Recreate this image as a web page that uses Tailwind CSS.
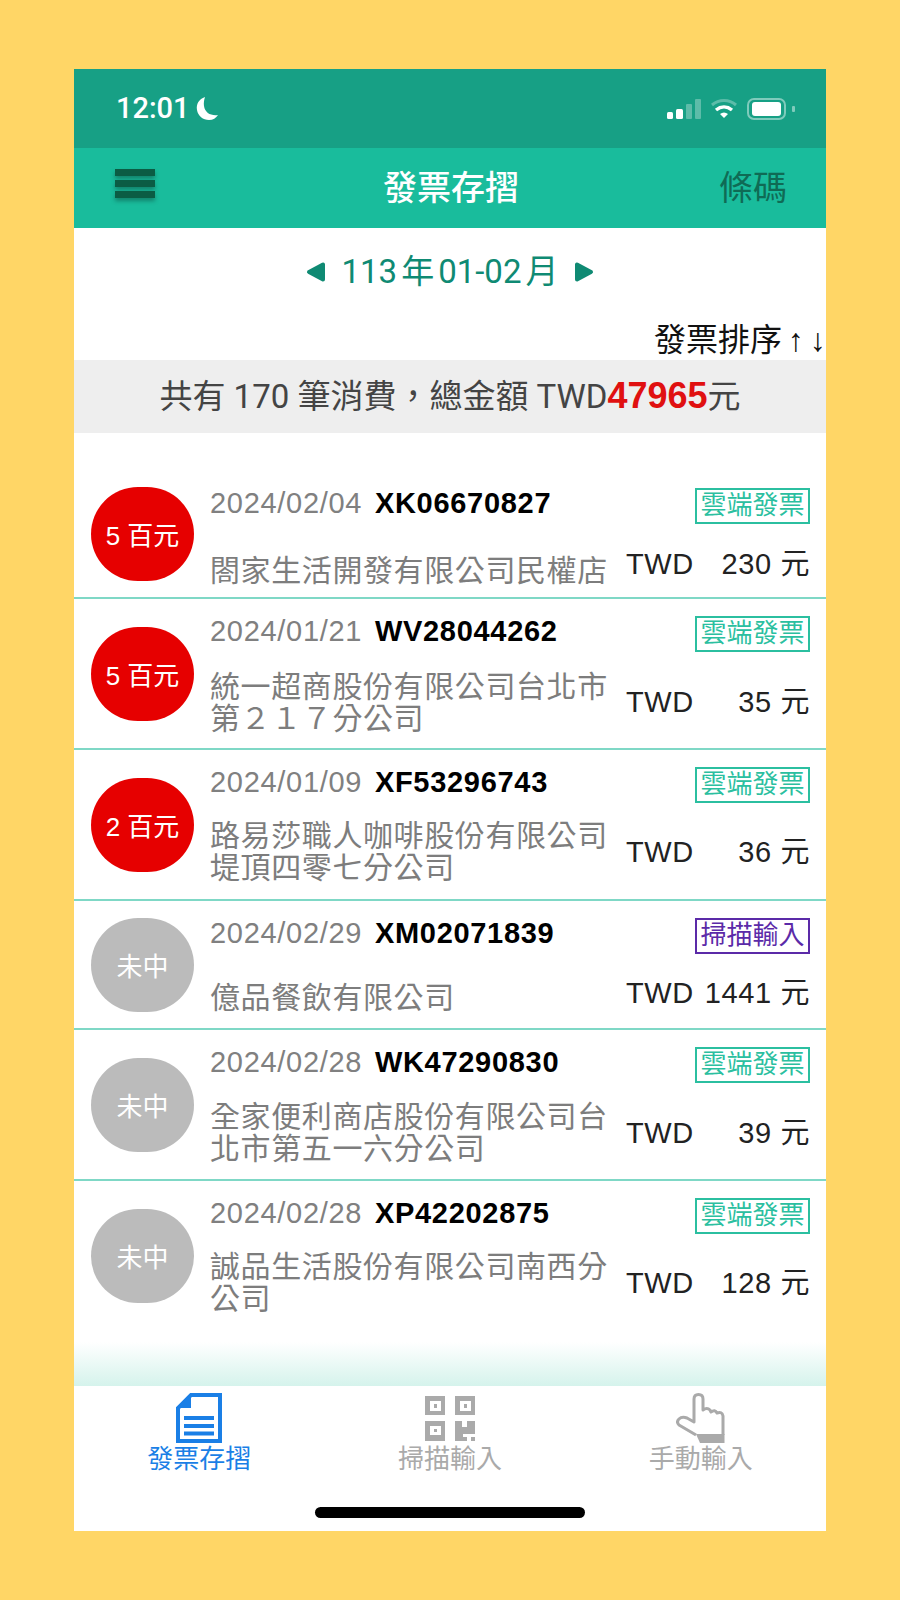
<!DOCTYPE html>
<html lang="zh-Hant">
<head>
    <meta charset="UTF-8">
    <meta name="viewport" content="width=device-width, initial-scale=1.0">
    <title>發票存摺</title>
    <script src="https://cdn.jsdelivr.net/npm/@tailwindcss/browser@4"></script>
</head>
<body class="bg-[#ffd666] h-[1600px] overflow-hidden pt-[69px] font-['Liberation_Sans','Noto_Sans_CJK_TC',sans-serif]">
    <div class="w-[752px] h-[1462px] mx-auto bg-white flex flex-col">
        <!-- status bar -->
        <div class="h-[79px] bg-[#17a085] flex items-center justify-between pl-[42px] pr-[30px] text-white">
            <div class="flex items-center gap-[5px] font-['Roboto','Liberation_Sans',sans-serif] text-[29px] font-medium">
                <span>12:01</span>
                <svg width="24" height="26" viewBox="0 0 24 26"><path d="M10 1C4 3 1 8 2 14c1 6 6 10 12 10 4 0 7-2 9-5-7 1-13-2-14-9-.4-3 0-6 1-9z" fill="#fff"/></svg>
            </div>
            <div class="flex items-center gap-[9px]">
                <svg width="34" height="20" viewBox="0 0 34 20"><rect x="0" y="13" width="6" height="7" rx="1.500" fill="#fff"/><rect x="9" y="10" width="7" height="10" rx="1.500" fill="#fff"/><rect x="19" y="5" width="6" height="15" rx="1" fill="#fff" fill-opacity=".3"/><rect x="28" y="0" width="6" height="20" rx="1" fill="#fff" fill-opacity=".3"/></svg>
                <svg width="28" height="20" viewBox="0 0 28 20"><path d="M2 6c7-6 17-6 24 0" fill="none" stroke="#fff" stroke-opacity=".3" stroke-width="3"/><path d="M6 11c5-4 11-4 16 0" fill="none" stroke="#fff" stroke-width="3.500"/><path d="M14 19l-4-4c2.500-2 5.500-2 8 0z" fill="#fff"/></svg>
                <svg width="49" height="22" viewBox="0 0 49 22"><rect x="1" y="1" width="37" height="20" rx="6" fill="none" stroke="#fff" stroke-opacity=".45" stroke-width="2"/><rect x="5" y="4" width="29" height="14" rx="3" fill="#fff"/><rect x="45" y="8" width="3" height="6" rx="1" fill="#fff" fill-opacity=".45"/></svg>
            </div>
        </div>
        <!-- header -->
        <div class="h-[80px] bg-[#19bc9c] grid grid-cols-[1fr_auto_1fr] items-center pl-[41px] pr-[39px]">
            <div class="flex flex-col gap-[4px] w-[40px] pb-[10px] drop-shadow-[0_3px_2px_rgba(0,0,0,0.3)]">
                <span class="h-[7px] bg-[#0b5c44]"></span>
                <span class="h-[7px] bg-[#0b5c44]"></span>
                <span class="h-[7px] bg-[#0b5c44]"></span>
            </div>
            <div class="text-white text-[34px] font-medium leading-none">發票存摺</div>
            <div class="text-right text-[#0f6b55] text-[34px] leading-none">條碼</div>
        </div>
        <!-- period -->
        <div class="h-[86px] flex items-center justify-center gap-[16px] text-[#0f8a73] text-[33px] pt-[1px]">
            <svg width="20" height="22" viewBox="0 0 20 22"><path d="M17 3.500V18.500L3 11z" fill="#0f8a73" stroke="#0f8a73" stroke-width="4" stroke-linejoin="round"/></svg>
            <span class="font-['Roboto','Noto_Sans_CJK_TC',sans-serif]">113<span class="mx-[4px]">年</span>01-02<span class="ml-[4px]">月</span></span>
            <svg width="20" height="22" viewBox="0 0 20 22"><path d="M3 3.500V18.500L17 11z" fill="#0f8a73" stroke="#0f8a73" stroke-width="4" stroke-linejoin="round"/></svg>
        </div>
        <!-- sort -->
        <div class="h-[46px] flex items-center justify-end text-[32px] text-[#111] leading-none pt-[5px]">
            <span>發票排序</span><span class="ml-[6px] mr-[6px]">↑</span><span>↓</span>
        </div>
        <!-- summary -->
        <div class="h-[73px] bg-[#eeeeee] flex items-center justify-center text-[33px] text-[#444] font-['Roboto','Noto_Sans_CJK_TC',sans-serif] pb-[2px]">
            <span>共有 170 筆消費，總金額 TWD<b class="text-[#e01010] text-[36px] font-bold font-['Liberation_Sans']">47965</b>元</span>
        </div>
        <!-- invoice list -->
        <div class="mt-[38px]">
            <div class="h-[128px] border-b-2 border-[#7fd8c6] flex items-center pl-[17px] pr-[16px] gap-[16px]">
                <div class="w-[103px] h-[94px] pt-[5px] shrink-0 rounded-full bg-[#e60000] text-white text-[26px] flex items-center justify-center">5 百元</div>
                <div class="flex-1 min-w-0 self-stretch pt-[17px]">
                    <div class="flex items-start justify-between h-[36px]">
                        <div class="text-[29px] leading-[30px] tracking-[0.7px] text-[#808080]">2024/02/04 <b class="ml-[4px] text-black">XK06670827</b></div>
                        <div class="h-[36px] w-[115px] border-2 border-[#2bbfa0] text-[#2bbfa0] text-[26px] leading-[30px] text-center">雲端發票</div>
                    </div>
                    <div class="flex items-center justify-between mt-[24px]">
                        <div class="w-[405px] text-[30px] leading-[32px] tracking-[0.6px] text-[#7d7d7d]">閤家生活開發有限公司民權店</div>
                        <div class="w-[184px] flex justify-between text-[29px] leading-[32px] tracking-[0.6px] text-[#222] pb-[14px]"><span>TWD</span><span>230 元</span></div>
                    </div>
                </div>
            </div>
            <div class="h-[151px] border-b-2 border-[#7fd8c6] flex items-center pl-[17px] pr-[16px] gap-[16px]">
                <div class="w-[103px] h-[94px] pt-[5px] shrink-0 rounded-full bg-[#e60000] text-white text-[26px] flex items-center justify-center">5 百元</div>
                <div class="flex-1 min-w-0 self-stretch pt-[17px]">
                    <div class="flex items-start justify-between h-[36px]">
                        <div class="text-[29px] leading-[30px] tracking-[0.7px] text-[#808080]">2024/01/21 <b class="ml-[4px] text-black">WV28044262</b></div>
                        <div class="h-[36px] w-[115px] border-2 border-[#2bbfa0] text-[#2bbfa0] text-[26px] leading-[30px] text-center">雲端發票</div>
                    </div>
                    <div class="flex items-center justify-between mt-[19px]">
                        <div class="w-[405px] text-[30px] leading-[32px] tracking-[0.6px] text-[#7d7d7d]">統一超商股份有限公司台北市第２１７分公司</div>
                        <div class="w-[184px] flex justify-between text-[29px] leading-[32px] tracking-[0.6px] text-[#222] pb-[2px]"><span>TWD</span><span>35 元</span></div>
                    </div>
                </div>
            </div>
            <div class="h-[151px] border-b-2 border-[#7fd8c6] flex items-center pl-[17px] pr-[16px] gap-[16px]">
                <div class="w-[103px] h-[94px] pt-[5px] shrink-0 rounded-full bg-[#e60000] text-white text-[26px] flex items-center justify-center">2 百元</div>
                <div class="flex-1 min-w-0 self-stretch pt-[17px]">
                    <div class="flex items-start justify-between h-[36px]">
                        <div class="text-[29px] leading-[30px] tracking-[0.7px] text-[#808080]">2024/01/09 <b class="ml-[4px] text-black">XF53296743</b></div>
                        <div class="h-[36px] w-[115px] border-2 border-[#2bbfa0] text-[#2bbfa0] text-[26px] leading-[30px] text-center">雲端發票</div>
                    </div>
                    <div class="flex items-center justify-between mt-[17px]">
                        <div class="w-[405px] text-[30px] leading-[32px] tracking-[0.6px] text-[#7d7d7d]">路易莎職人咖啡股份有限公司堤頂四零七分公司</div>
                        <div class="w-[184px] flex justify-between text-[29px] leading-[32px] tracking-[0.6px] text-[#222]"><span>TWD</span><span>36 元</span></div>
                    </div>
                </div>
            </div>
            <div class="h-[129px] border-b-2 border-[#7fd8c6] flex items-center pl-[17px] pr-[16px] gap-[16px]">
                <div class="w-[103px] h-[94px] pt-[5px] shrink-0 rounded-full bg-[#bbbbbb] text-white text-[26px] flex items-center justify-center">未中</div>
                <div class="flex-1 min-w-0 self-stretch pt-[17px]">
                    <div class="flex items-start justify-between h-[36px]">
                        <div class="text-[29px] leading-[30px] tracking-[0.7px] text-[#808080]">2024/02/29 <b class="ml-[4px] text-black">XM02071839</b></div>
                        <div class="h-[36px] w-[115px] border-2 border-[#5b2aa8] text-[#5b2aa8] text-[26px] leading-[30px] text-center">掃描輸入</div>
                    </div>
                    <div class="flex items-center justify-between mt-[23px]">
                        <div class="w-[405px] text-[30px] leading-[32px] tracking-[0.6px] text-[#7d7d7d]">億品餐飲有限公司</div>
                        <div class="w-[184px] flex justify-between text-[29px] leading-[32px] tracking-[0.6px] text-[#222] pb-[10px]"><span>TWD</span><span>1441 元</span></div>
                    </div>
                </div>
            </div>
            <div class="h-[151px] border-b-2 border-[#7fd8c6] flex items-center pl-[17px] pr-[16px] gap-[16px]">
                <div class="w-[103px] h-[94px] pt-[5px] shrink-0 rounded-full bg-[#bbbbbb] text-white text-[26px] flex items-center justify-center">未中</div>
                <div class="flex-1 min-w-0 self-stretch pt-[17px]">
                    <div class="flex items-start justify-between h-[36px]">
                        <div class="text-[29px] leading-[30px] tracking-[0.7px] text-[#808080]">2024/02/28 <b class="ml-[4px] text-black">WK47290830</b></div>
                        <div class="h-[36px] w-[115px] border-2 border-[#2bbfa0] text-[#2bbfa0] text-[26px] leading-[30px] text-center">雲端發票</div>
                    </div>
                    <div class="flex items-center justify-between mt-[18px]">
                        <div class="w-[405px] text-[30px] leading-[32px] tracking-[0.6px] text-[#7d7d7d]">全家便利商店股份有限公司台北市第五一六分公司</div>
                        <div class="w-[184px] flex justify-between text-[29px] leading-[32px] tracking-[0.6px] text-[#222]"><span>TWD</span><span>39 元</span></div>
                    </div>
                </div>
            </div>
            <div class="h-[150px] flex items-center pl-[17px] pr-[16px] gap-[16px]">
                <div class="w-[103px] h-[94px] pt-[5px] shrink-0 rounded-full bg-[#bbbbbb] text-white text-[26px] flex items-center justify-center">未中</div>
                <div class="flex-1 min-w-0 self-stretch pt-[17px]">
                    <div class="flex items-start justify-between h-[36px]">
                        <div class="text-[29px] leading-[30px] tracking-[0.7px] text-[#808080]">2024/02/28 <b class="ml-[4px] text-black">XP42202875</b></div>
                        <div class="h-[36px] w-[115px] border-2 border-[#2bbfa0] text-[#2bbfa0] text-[26px] leading-[30px] text-center">雲端發票</div>
                    </div>
                    <div class="flex items-center justify-between mt-[17px]">
                        <div class="w-[405px] text-[30px] leading-[32px] tracking-[0.6px] text-[#7d7d7d]">誠品生活股份有限公司南西分公司</div>
                        <div class="w-[184px] flex justify-between text-[29px] leading-[32px] tracking-[0.6px] text-[#222]"><span>TWD</span><span>128 元</span></div>
                    </div>
                </div>
            </div>
        </div>
        <!-- fade over the tab bar -->
        <div class="flex-1 flex flex-col justify-end">
            <div class="h-[44px] bg-gradient-to-b from-white to-[#d5f3ec]"></div>
        </div>
        <!-- tab bar -->
        <div class="h-[145px] grid grid-cols-3 relative">
            <div class="flex flex-col items-center pt-[7px] text-[#1a7fe6]">
                <svg width="46" height="50" viewBox="0 0 46 50">
                    <path d="M15 2H44V48H2V15z" fill="#fff" stroke="#1a7fe6" stroke-width="4"/>
                    <path d="M15 0L0 15H15z" fill="#1a7fe6"/>
                    <path d="M8 23H38V27H8zM8 31H38V35H8zM8 38.500H38V42.500H8z" fill="#1a7fe6"/>
                </svg>
                <span class="text-[26px] leading-[30px] mt-[1px]">發票存摺</span>
            </div>
            <div class="flex flex-col items-center pt-[10px] text-[#aaaaaa]">
                <svg width="50" height="45" viewBox="0 0 50 45">
                    <path fill-rule="evenodd" fill="#aaaaaa" d="M0 0H20V19H0zM5 5V15H16V5zM30 0H50V19H30zM35 5V15H46V5zM0 25H20V45H0zM5 30V39H16V30zM30 25H37V31H42V25H50V38H38V45H30z"/>
                    <path fill="#aaaaaa" d="M9 8H12V12H9zM39 8H42V12H39zM9 33H12V36H9zM38 41H42V45H38zM46 41H50V45H46z"/>
                </svg>
                <span class="text-[26px] leading-[30px] mt-[3px]">掃描輸入</span>
            </div>
            <div class="flex flex-col items-center pt-[7px] text-[#aaaaaa]">
                <svg width="49" height="50" viewBox="0 0 49 50">
                    <path d="M20 42L3 32Q0 29 3 26Q6 23 11 25L18 29V6Q18 1.500 22.500 1.500Q27 1.500 27 6V17Q31 14 34 17L35 19Q39 16 41 20Q46 18 47 23V42" fill="none" stroke="#aaaaaa" stroke-width="3" stroke-linejoin="round"/>
                    <path d="M20 41H48.500V50H24z" fill="#aaaaaa"/>
                </svg>
                <span class="text-[26px] leading-[30px] mt-[1px]">手動輸入</span>
            </div>
            <div class="absolute left-[241px] bottom-[13px] w-[270px] h-[11px] rounded-full bg-black"></div>
        </div>
    </div>
</body>
</html>
